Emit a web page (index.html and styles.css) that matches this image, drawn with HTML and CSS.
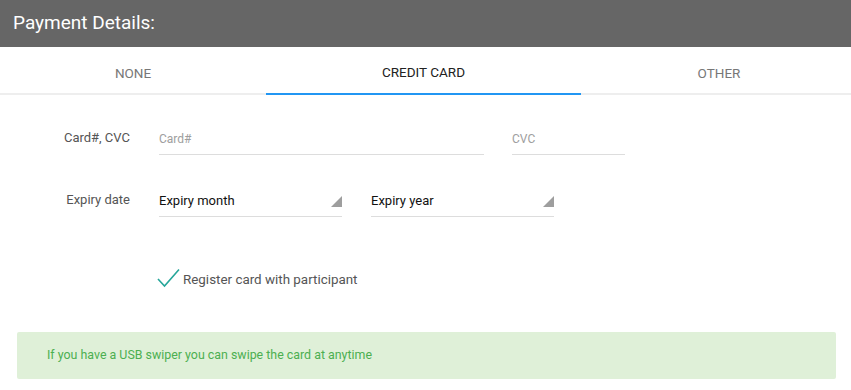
FILE: index.html
```html
<!DOCTYPE html>
<html lang="en">
<head>
  <meta charset="UTF-8">
  <title>Payment Details</title>
  <link rel="stylesheet" href="styles.css">
</head>
<body>
  <div class="header">Payment Details:</div>

  <div class="tabs">
    <div class="tab tab-none">None</div>
    <div class="tab tab-card active">Credit Card</div>
    <div class="tab tab-other">Other</div>
  </div>

  <div class="form">
    <div class="row">
      <div class="label">Card#, CVC</div>
      <div class="field field-card"><span class="placeholder">Card#</span></div>
      <div class="field field-cvc"><span class="placeholder">CVC</span></div>
    </div>

    <div class="row">
      <div class="label">Expiry date</div>
      <div class="field select">Expiry month<span class="caret"></span></div>
      <div class="field select">Expiry year<span class="caret"></span></div>
    </div>

    <div class="check">
      <svg class="tick" width="24" height="20" viewBox="0 0 24 20">
        <polyline points="1,11 7.5,18 22,1.5" fill="none" stroke="#26a69a" stroke-width="1.6"/>
      </svg>
      <span>Register card with participant</span>
    </div>
  </div>

  <div class="alert">If you have a USB swiper you can swipe the card at anytime</div>
</body>
</html>
```

FILE: styles.css
```css
body {
  margin: 0;
  font-family: Roboto, "Liberation Sans", Arial, sans-serif;
  background: #fff;
}
.header {
  height: 47px;
  line-height: 45px;
  padding-left: 13px;
  background: #666;
  color: #fff;
  font-size: 19px;
}
.tabs {
  display: flex;
  height: 48px;
  border-bottom: 2px solid #eee;
  box-sizing: border-box;
}
.tab {
  display: flex;
  align-items: center;
  justify-content: center;
  text-transform: uppercase;
  font-size: 13.5px;
  color: #777;
  box-sizing: border-box;
  height: 48px;
  padding-top: 3px;
}
.tab-none { width: 266px; }
.tab-card { width: 315px; }
.tab-other { flex: 1; padding-left: 6px; }
.tab.active {
  color: #222;
  border-bottom: 2px solid #2196f3;
}
.form {
  padding: 26px 0 0 0;
}
.row {
  display: flex;
  align-items: flex-end;
  margin-bottom: 28px;
}
.label {
  text-align: right;
  font-size: 13px;
  color: #555;
  padding-right: 29px;
  box-sizing: border-box;
  width: 159px;
  line-height: 34px;
  align-self: flex-start;
}
.field {
  height: 33px;
  line-height: 34px;
  border-bottom: 1px solid #ddd;
  box-sizing: border-box;
  font-size: 13px;
  color: #111;
  margin-right: 28px;
  position: relative;
}
.field-card { width: 325px; }
.field-cvc { width: 113px; }
.placeholder {
  color: #9e9e9e;
  font-size: 12px;
}
.select {
  width: 183px;
  margin-right: 29px;
}
.caret {
  position: absolute;
  right: 0;
  top: 12px;
  width: 0;
  height: 0;
  border-left: 11px solid transparent;
  border-bottom: 11px solid #9e9e9e;
}
.check {
  display: flex;
  align-items: center;
  margin: 52px 0 0 157px;
  font-size: 13.4px;
  color: #555;
  height: 20px;
}
.tick {
  margin-right: 2px;
  margin-top: -2px;
}
.alert {
  margin: 43px 15px 0 17px;
  height: 47px;
  line-height: 45px;
  padding-left: 30px;
  background: #dff0d8;
  color: #4caf50;
  font-size: 12.4px;
  border-radius: 2px;
}
```
